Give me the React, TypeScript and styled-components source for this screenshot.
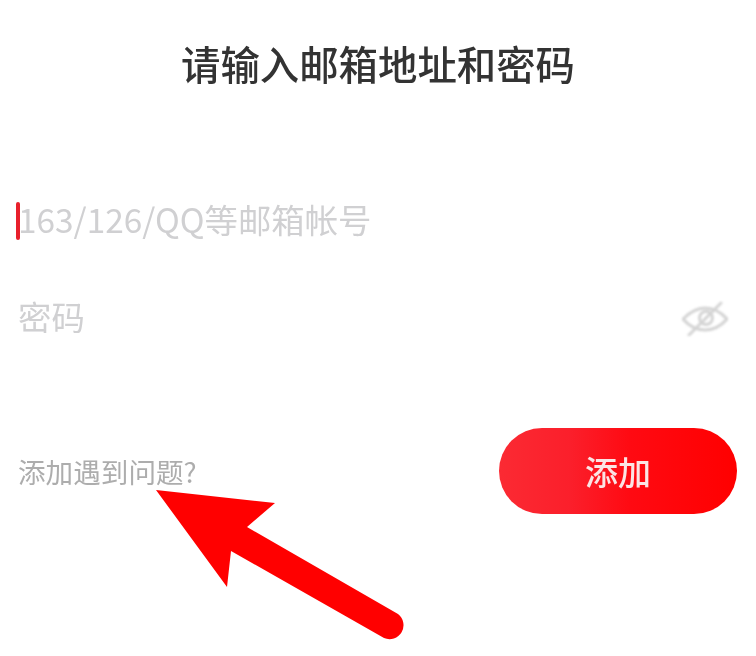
import React from "react";
import styled, { createGlobalStyle } from "styled-components";

const GlobalStyle = createGlobalStyle`
  html, body {
    margin: 0;
    padding: 0;
    background: #fff;
  }
  * {
    box-sizing: border-box;
  }
`;

const Page = styled.div`
  position: relative;
  width: 756px;
  height: 656px;
  overflow: hidden;
  background: #fff;
  font-family: "Noto Sans CJK SC", "Noto Sans", sans-serif;
`;

const Title = styled.h1`
  margin: 0;
  padding-top: 37px;
  height: 172px;
  text-align: center;
  font-size: 39.4px;
  line-height: 52px;
  font-weight: 500;
  color: #333;
  filter: blur(0.4px);
`;

const Form = styled.div`
  display: flex;
  flex-direction: column;
  padding: 0 28px 0 16px;
`;

const Field = styled.div`
  display: flex;
  align-items: center;
  justify-content: space-between;
  height: 97px;
`;

const Placeholder = styled.div`
  display: flex;
  align-items: center;
  font-size: 33.4px;
  line-height: 44px;
  color: #d0d0d2;
  filter: blur(0.6px);
`;

const Caret = styled.span`
  width: 4px;
  height: 38px;
  background: #e8202c;
  border-radius: 2px;
`;

const HintText = styled.span<{ $inset?: number }>`
  margin-left: ${(p) => p.$inset ?? 0}px;
  margin-top: -3px;
`;

const Footer = styled.div`
  display: flex;
  align-items: center;
  justify-content: space-between;
  margin-top: 62px;
  padding: 0 19px 0 18px;
`;

const HelpLink = styled.a`
  font-size: 27.6px;
  line-height: 36px;
  color: #adadad;
  margin-top: -1px;
  filter: blur(0.6px);
`;

const AddButton = styled.button`
  width: 238px;
  height: 86px;
  border: none;
  border-radius: 43px;
  padding: 0;
  background: linear-gradient(90deg, #fb2a33 0%, #fb1f2b 30%, #ff0a12 55%, #ff0000 100%);
  color: #fbe4e4;
  font-family: inherit;
  font-size: 33px;
  font-weight: 500;
  filter: blur(0.6px);
`;

const ArrowMark = styled.svg`
  position: absolute;
  left: 0;
  top: 0;
  pointer-events: none;
`;

const EyeOff = () => (
  <svg width="46" height="36" viewBox="0 0 46 36" fill="none" stroke="#d4d4d4" strokeWidth="3" strokeLinecap="round" style={{ filter: "blur(0.8px)" }}>
    <path d="M1 19 C9 11 16 8 23 8 C30 8 38 11 45 19 C38 27 30 30 23 30 C15 30 8 27 1 19 Z" />
    <circle cx="24" cy="18" r="6.5" />
    <path d="M7 35 L39 3" />
  </svg>
);

const App: React.FC = () => {
  return (
    <Page>
      <GlobalStyle />
      <Title>请输入邮箱地址和密码</Title>
      <Form>
        <Field>
          <Placeholder>
            <Caret />
            <HintText $inset={-2}>163/126/QQ等邮箱帐号</HintText>
          </Placeholder>
        </Field>
        <Field>
          <Placeholder>
            <HintText $inset={2}>密码</HintText>
          </Placeholder>
          <EyeOff />
        </Field>
      </Form>
      <Footer>
        <HelpLink>添加遇到问题?</HelpLink>
        <AddButton>添加</AddButton>
      </Footer>
      <ArrowMark width="756" height="656" viewBox="0 0 756 656">
        <path
          d="M156 490 L275 503 L247 527 L398 614 A14 14 0 0 1 384 638 L231 551 L227 587 Z"
          fill="#ff0000"
        />
      </ArrowMark>
    </Page>
  );
};

export default App;
